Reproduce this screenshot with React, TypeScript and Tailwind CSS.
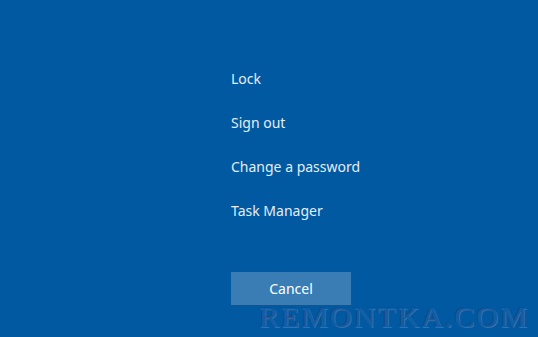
import React from "react";

export default function App() {
  const items = ["Lock", "Sign out", "Change a password", "Task Manager"];
  return (
    <div
      className="relative w-[538px] h-[337px] overflow-hidden bg-[#0059a1]"
      style={{ fontFamily: '"Segoe UI", "Noto Sans", "Open Sans", sans-serif' }}
    >
      <div className="flex flex-col pl-[231px] pt-[68px]">
        <div className="flex flex-col gap-[22px]">
          {items.map((t) => (
            <div key={t} className="h-[22px] leading-[22px] text-[14px] text-[#e6edf5]">
              {t}
            </div>
          ))}
        </div>
        <button className="mt-[50px] w-[120px] h-[33px] bg-[#3a7db4] text-[14px] text-white">
          Cancel
        </button>
      </div>
      <div
        className="absolute left-[259px] top-[302px] text-[30px] leading-[30px] tracking-[2px] text-[#0f5ea6]"
        style={{
          fontFamily: '"Liberation Serif", serif',
          textShadow: "1px 1px 0 #3a70a8, -1px -1px 0 #1b4a84",
        }}
      >
        REMONTKA.COM
      </div>
    </div>
  );
}
